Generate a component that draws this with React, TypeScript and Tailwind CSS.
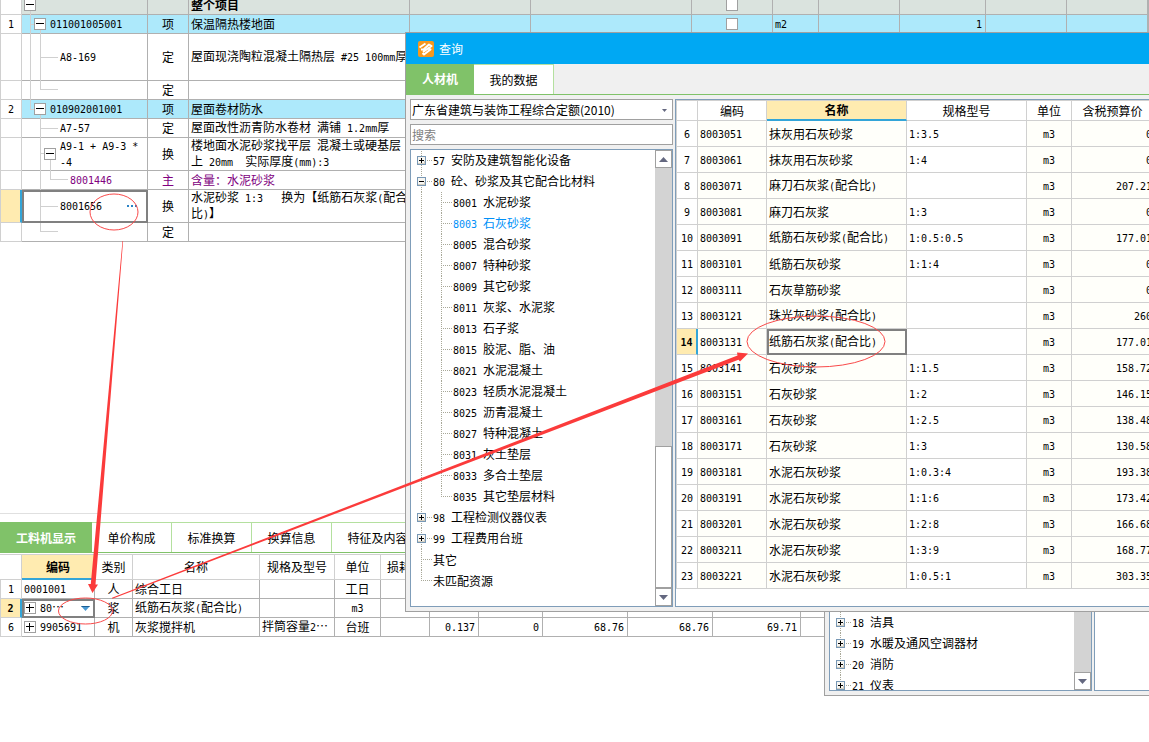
import { useState, type ReactNode } from 'react';
import clsx from 'clsx';

// Latin runs are set in a narrow mono face so that two of them fill one CJK square
function T({ children }: { children: string }) {
  return (
    <>
      {children.split(/([ -~]+)/).map((part, i) =>
        i % 2 ? (
          <span key={i} className="whitespace-pre font-['DejaVu_Sans_Mono',monospace] text-[10px]">
            {part}
          </span>
        ) : (
          part
        )
      )}
    </>
  );
}

const budgetCols = [
  'w-[21px]', 'w-[126px]', 'w-[41px]', 'w-[221px]', 'w-[121px]', 'w-[161px]', 'w-[81px]',
  'w-[46px]', 'w-[81px]', 'w-[86px]', 'w-[81px]', 'w-[81px]', '',
];

type BudgetRow = {
  no?: string;
  code?: string;
  kind?: string;
  name?: string;
  unit?: string;
  qty?: string;
  height: string;
  indent?: string;
  toggle?: boolean;
  style?: 'root' | 'item' | 'main';
  selected?: boolean;
};

const budgetRows: BudgetRow[] = [
  { name: '整个项目', height: 'h-[19px]', indent: 'pl-[2px]', toggle: true, style: 'root' },
  { no: '1', code: '011001005001', kind: '项', name: '保温隔热楼地面', unit: 'm2', qty: '1', height: 'h-[19px]', indent: 'pl-3', toggle: true, style: 'item' },
  { code: 'A8-169', kind: '定', name: '屋面现浇陶粒混凝土隔热层 #25 100mm厚', height: 'h-[47px]', indent: 'pl-[38px]' },
  { kind: '定', height: 'h-[19px]' },
  { no: '2', code: '010902001001', kind: '项', name: '屋面卷材防水', height: 'h-[19px]', indent: 'pl-3', toggle: true, style: 'item' },
  { code: 'A7-57', kind: '定', name: '屋面改性沥青防水卷材 满铺 1.2mm厚', height: 'h-[19px]', indent: 'pl-[38px]' },
  { code: 'A9-1 + A9-3 *\n-4', kind: '换', name: '楼地面水泥砂浆找平层 混凝土或硬基层\n上 20mm  实际厚度(mm):3', height: 'h-[33px]', indent: 'pl-[22px]', toggle: true },
  { code: '8001446', kind: '主', name: '含量：水泥砂浆', height: 'h-[19px]', indent: 'pl-12', style: 'main' },
  { code: '8001656', kind: '换', name: '水泥砂浆 1:3   换为【纸筋石灰浆(配合\n比)】', height: 'h-[33px]', indent: 'pl-[38px]', selected: true },
  { kind: '定', height: 'h-[19px]' },
];

const resourceCols = [
  'w-[22px]', 'w-[73px]', 'w-[38px]', 'w-[127px]', 'w-[75px]', 'w-[46px]', 'w-[49px]',
  'w-[49px]', 'w-[64px]', 'w-[85px]', 'w-[85px]', 'w-[88px]', '',
];
const resourceHeads = ['', '编码', '类别', '名称', '规格及型号', '单位', '损耗率', '含量', '数量', '', '', '', ''];
const resourceRows = [
  ['1', '0001001', '人', '综合工日', '', '工日', '', '', '', '', '', '', ''],
  ['2', '80…', '浆', '纸筋石灰浆(配合比)', '', 'm3', '', '0', '0.0002', '177.01', '177.01', '177.01', ''],
  ['6', '9905691', '机', '灰浆搅拌机', '拌筒容量2…', '台班', '', '0.137', '0', '68.76', '68.76', '69.71', ''],
];
const resourceTabs = [
  { label: '工料机显示', width: 'w-[92px]' },
  { label: '单价构成', width: 'w-20 border-r' },
  { label: '标准换算', width: 'w-20 border-r' },
  { label: '换算信息', width: 'w-20 border-r' },
  { label: '特征及内容', width: 'w-[92px] border-r' },
];

type TreeNode = { text: string; level?: 1; open?: boolean; toggle?: boolean; last?: boolean };

const categories: TreeNode[] = [
  { text: '57 安防及建筑智能化设备', toggle: true },
  { text: '80 砼、砂浆及其它配合比材料', toggle: true, open: true },
  { text: '8001 水泥砂浆', level: 1 },
  { text: '8003 石灰砂浆', level: 1 },
  { text: '8005 混合砂浆', level: 1 },
  { text: '8007 特种砂浆', level: 1 },
  { text: '8009 其它砂浆', level: 1 },
  { text: '8011 灰浆、水泥浆', level: 1 },
  { text: '8013 石子浆', level: 1 },
  { text: '8015 胶泥、脂、油', level: 1 },
  { text: '8021 水泥混凝土', level: 1 },
  { text: '8023 轻质水泥混凝土', level: 1 },
  { text: '8025 沥青混凝土', level: 1 },
  { text: '8027 特种混凝土', level: 1 },
  { text: '8031 灰土垫层', level: 1 },
  { text: '8033 多合土垫层', level: 1 },
  { text: '8035 其它垫层材料', level: 1, last: true },
  { text: '98 工程检测仪器仪表', toggle: true },
  { text: '99 工程费用台班', toggle: true },
  { text: '其它' },
  { text: '未匹配资源', last: true },
];

const moreCategories: TreeNode[] = [
  { text: '18 洁具', toggle: true },
  { text: '19 水暖及通风空调器材', toggle: true },
  { text: '20 消防', toggle: true },
  { text: '21 仪表', toggle: true },
];

const materialHeads = ['', '编码', '名称', '规格型号', '单位', '含税预算价'];
const materialCols = ['w-[21px]', 'w-[69px]', 'w-[140px]', 'w-[120px]', 'w-[45px]', 'w-[82px]'];
const materials = [
  ['6', '8003051', '抹灰用石灰砂浆', '1:3.5', 'm3', '0'],
  ['7', '8003061', '抹灰用石灰砂浆', '1:4', 'm3', '0'],
  ['8', '8003071', '麻刀石灰浆(配合比)', '', 'm3', '207.21'],
  ['9', '8003081', '麻刀石灰浆', '1:3', 'm3', '0'],
  ['10', '8003091', '纸筋石灰砂浆(配合比)', '1:0.5:0.5', 'm3', '177.01'],
  ['11', '8003101', '纸筋石灰砂浆', '1:1:4', 'm3', '0'],
  ['12', '8003111', '石灰草筋砂浆', '', 'm3', '0'],
  ['13', '8003121', '珠光灰砂浆(配合比)', '', 'm3', '260'],
  ['14', '8003131', '纸筋石灰浆(配合比)', '', 'm3', '177.01'],
  ['15', '8003141', '石灰砂浆', '1:1.5', 'm3', '158.72'],
  ['16', '8003151', '石灰砂浆', '1:2', 'm3', '146.15'],
  ['17', '8003161', '石灰砂浆', '1:2.5', 'm3', '138.48'],
  ['18', '8003171', '石灰砂浆', '1:3', 'm3', '130.58'],
  ['19', '8003181', '水泥石灰砂浆', '1:0.3:4', 'm3', '193.38'],
  ['20', '8003191', '水泥石灰砂浆', '1:1:6', 'm3', '173.42'],
  ['21', '8003201', '水泥石灰砂浆', '1:2:8', 'm3', '166.68'],
  ['22', '8003211', '水泥石灰砂浆', '1:3:9', 'm3', '168.77'],
  ['23', '8003221', '水泥石灰砂浆', '1:0.5:1', 'm3', '303.35'],
];

function Cols({ widths }: { widths: string[] }) {
  return (
    <colgroup>
      {widths.map((w, i) => (
        <col key={i} className={w} />
      ))}
    </colgroup>
  );
}

function ToggleBox({ open }: { open?: boolean }) {
  return (
    <button
      aria-label={open ? '折叠' : '展开'}
      className="relative z-10 h-3 w-3 shrink-0 border border-[#a0a0a0] bg-white"
    >
      <svg viewBox="0 0 10 10" className="block h-[10px] w-[10px]" shapeRendering="crispEdges">
        <path d={open ? 'M1 4h8v1H1z' : 'M1 4h8v1H1zM4 1h1v8H4z'} />
      </svg>
    </button>
  );
}

// Grey frame over the active cell
function CellFrame() {
  return <span className="pointer-events-none absolute -right-px -bottom-px left-0 top-0 z-10 border-2 border-[#808080]" />;
}

function BudgetTable() {
  return (
    <div className="relative overflow-hidden">
      <table className="-mt-1 w-full table-fixed border-separate border-spacing-0 border-l border-[#d0d0d0]">
        <Cols widths={budgetCols} />
        <tbody>
          {budgetRows.map((row, i) => {
            const cell = clsx(
              'border-b border-r border-[#b0b0b0] p-0',
              row.height,
              row.style === 'root' && 'bg-[#dae3de]',
              row.style === 'item' && 'bg-[#ade9fb]',
              row.style === 'main' && 'text-[#800080]'
            );
            return (
              <tr key={i}>
                <td
                  className={clsx(
                    'border-b border-r border-[#d0d0d0] p-0 text-center',
                    row.selected && 'border-r-2 border-r-[#33a5d8] bg-[#ffebb0]'
                  )}
                >
                  <T>{row.no ?? ''}</T>
                </td>
                <td className={clsx(cell, 'relative')}>
                  <div className={clsx('flex items-center gap-1', row.indent)}>
                    {row.toggle && <ToggleBox open />}
                    <span className="whitespace-pre">
                      <T>{row.code ?? ''}</T>
                    </span>
                    {row.selected && (
                      <button aria-label="选择" className="ml-auto mr-2.5 flex gap-[2px]">
                        <span className="h-[2px] w-[2px] bg-[#2b83c6]" />
                        <span className="h-[2px] w-[2px] bg-[#2b83c6]" />
                        <span className="h-[2px] w-[2px] bg-[#2b83c6]" />
                      </button>
                    )}
                  </div>
                  {row.selected && <CellFrame />}
                </td>
                <td className={clsx(cell, 'text-center')}>{row.kind}</td>
                <td className={clsx(cell, 'relative whitespace-pre pl-[2px]', row.style === 'root' && 'font-bold')}>
                  <T>{row.name ?? ''}</T>
                  {row.style === 'main' && (
                    <svg width="4" height="4" className="absolute right-0 top-0">
                      <path d="M0 0h4v4z" fill="#f00" />
                    </svg>
                  )}
                </td>
                <td className={cell} />
                <td className={cell} />
                <td className={clsx(cell, 'text-center')}>
                  {(row.style === 'root' || row.style === 'item') && (
                    <input
                      type="checkbox"
                      aria-label={row.name}
                      className="mx-auto block h-3 w-3 appearance-none border border-[#a0a0a0] bg-white"
                    />
                  )}
                </td>
                <td className={clsx(cell, 'pl-[2px]')}>
                  <T>{row.unit ?? ''}</T>
                </td>
                <td className={cell} />
                <td className={clsx(cell, 'pr-[3px] text-right')}>
                  <T>{row.qty ?? ''}</T>
                </td>
                <td className={cell} />
                <td className={cell} />
                <td className={cell} />
              </tr>
            );
          })}
        </tbody>
      </table>
      {/* Tree connectors */}
      <svg className="pointer-events-none absolute left-0 top-0 h-[242px] w-[148px]" shapeRendering="crispEdges">
        <path
          d="M30.5 10V109M30 24.5H34M30 109.5H34M40.5 30V90M40 57.5H58M40 89.5H58M40.5 115V232M40 128.5H58M40 153.5H44M40 206.5H58M40 231.5H58M50.5 160V180M50 179.5H68"
          fill="none"
          stroke="#d0d0d0"
        />
      </svg>
    </div>
  );
}

function ResourcePanel() {
  const [active, setActive] = useState('工料机显示');
  return (
    <section className="mt-[271px] border-t border-[#e0e0e0] pt-2">
      <div role="tablist" className="flex border-b border-[#80c269]">
        {resourceTabs.map(({ label, width }) => (
          <button
            key={label}
            role="tab"
            aria-selected={label === active}
            onClick={() => setActive(label)}
            className={clsx(
              'h-[30px] shrink-0 border-t pt-px',
              width,
              label === active
                ? 'border-[#80c269] bg-[#80c269] font-bold text-white'
                : 'border-[#b4e09f]'
            )}
          >
            {label}
          </button>
        ))}
        <span className="flex-1 border-t border-[#b4e09f]" />
      </div>
      <table className="mt-px w-full table-fixed border-separate border-spacing-0 border-t border-[#d0d0d0]">
        <Cols widths={resourceCols} />
        <thead>
          <tr>
            {resourceHeads.map((head, i) => (
              <th
                key={i}
                className={clsx(
                  'h-[25px] overflow-hidden whitespace-nowrap border-r border-[#d0d0d0] p-0',
                  i === 1 ? 'border-b-2 border-b-[#33a5d8] bg-[#ffebb0]' : 'border-b font-normal',
                  i === 6 && 'pl-[6px] text-left'
                )}
              >
                {head}
              </th>
            ))}
          </tr>
        </thead>
        <tbody>
          {resourceRows.map((row, r) => (
            <tr key={r}>
              {row.map((value, i) => (
                <td
                  key={i}
                  className={clsx(
                    'relative h-[19px] whitespace-nowrap border-b border-r p-0',
                    i === 0 ? 'border-[#d0d0d0]' : 'border-[#b0b0b0]',
                    i === 0 && 'border-l text-center',
                    i === 0 && r === 1 && 'border-r-2 border-r-[#33a5d8] bg-[#ffebb0] font-bold',
                    (i === 2 || i === 5) && 'text-center',
                    (i === 1 || i === 3 || i === 4) && 'pl-[2px]',
                    i > 6 && 'pr-[3px] text-right'
                  )}
                >
                  {i === 1 && r > 0 ? (
                    <div className="flex items-center gap-1">
                      <ToggleBox />
                      <span>
                        <T>{value}</T>
                      </span>
                      {r === 1 && (
                        <button aria-label="下拉" className="ml-auto mr-1">
                          <svg width="9" height="5">
                            <path d="M0 0h9L4.500 5z" fill="#4a9ad4" />
                            <path d="M0 0h9L8 1H1z" fill="#1c5f94" />
                          </svg>
                        </button>
                      )}
                    </div>
                  ) : (
                    <T>{value}</T>
                  )}
                  {i === 1 && r === 1 && <CellFrame />}
                </td>
              ))}
            </tr>
          ))}
        </tbody>
      </table>
    </section>
  );
}

function NodeBox({ open }: { open?: boolean }) {
  return (
    <svg width="9" height="9" shapeRendering="crispEdges">
      <rect width="9" height="9" fill="#7898b5" />
      <rect x="1" y="1" width="7" height="7" fill="#f7f6f2" />
      <path d="M1 7h7v1H1zM7 5h1v3H7z" fill="#d3cdbf" />
      <path d={open ? 'M2 4h5v1H2z' : 'M2 4h5v1H2zM4 2h1v5H4z'} />
    </svg>
  );
}

function Tree({ nodes, continued }: { nodes: TreeNode[]; continued?: boolean }) {
  const [current, setCurrent] = useState('8003 石灰砂浆');
  return (
    <ul className="min-w-0 flex-1">
      {nodes.map((node, i) => {
        const rootEnd = node.last && !node.level;
        return (
          <li key={node.text} className="flex h-[21px] items-center pl-[6px]">
            <svg
              className={clsx('h-[21px] shrink-0', node.level ? 'w-9' : 'w-4')}
              shapeRendering="crispEdges"
              stroke="#a8a898"
              strokeDasharray="1 1"
            >
              <path d={clsx(i === 0 && !continued ? 'M4.500 1' : 'M4.500 0', rootEnd ? 'V10' : 'V21')} />
              {!node.level && <path d="M4 10.500H15" />}
              {node.level && <path d={node.last ? 'M24.500 0V10' : 'M24.500 0V21'} />}
              {node.level && <path d="M24 10.500H35" />}
              {node.toggle && (
                <g strokeDasharray="none" stroke="none" transform="translate(0 6)">
                  <NodeBox open={node.open} />
                </g>
              )}
            </svg>
            <button
              onClick={() => setCurrent(node.text)}
              className={clsx('whitespace-nowrap', node.text === current && 'text-[#0090f8]')}
            >
              <T>{node.text}</T>
            </button>
          </li>
        );
      })}
    </ul>
  );
}

function ScrollButton({ up }: { up?: boolean }) {
  return (
    <button
      aria-label={up ? '向上滚动' : '向下滚动'}
      className="flex h-[18px] shrink-0 items-center justify-center border border-[#a0a0a0] bg-white"
    >
      <svg width="9" height="5">
        <path d={up ? 'M0 5h9L4.500 0z' : 'M0 0h9L4.500 5z'} fill="#646880" />
      </svg>
    </button>
  );
}

function Panel({ children, className }: { children?: ReactNode; className?: string }) {
  return <div className={clsx('flex overflow-hidden border border-[#7f9db9] bg-white', className)}>{children}</div>;
}

function MaterialTable() {
  const [selected, setSelected] = useState('14');
  return (
    <table className="w-[478px] shrink-0 table-fixed self-start border-separate border-spacing-0 border-l border-t border-[#d0d0d0]">
      <Cols widths={materialCols} />
      <thead>
        <tr>
          {materialHeads.map((head, i) => (
            <th
              key={i}
              className={clsx(
                'h-5 border-r border-[#d0d0d0] p-0',
                i === 2 ? 'border-b-2 border-b-[#33a5d8] bg-[#ffebb0]' : 'border-b font-normal'
              )}
            >
              {head}
            </th>
          ))}
        </tr>
      </thead>
      <tbody>
        {materials.map((row) => (
          <tr key={row[0]} onClick={() => setSelected(row[0])}>
            {row.map((value, i) => (
              <td
                key={i}
                className={clsx(
                  'relative h-[26px] whitespace-nowrap border-b border-r border-[#d0d0d0] p-0',
                  (i === 0 || i === 4) && 'text-center',
                  (i === 1 || i === 2 || i === 3) && 'pl-[2px]',
                  i === 5 && 'pr-px text-right',
                  i !== 0 && i !== 3 && 'bg-[#fffffa]',
                  i === 0 && row[0] === selected && 'border-r-2 border-r-[#33a5d8] bg-[#ffebb0] font-bold'
                )}
              >
                <T>{value}</T>
                {i === 2 && row[0] === selected && <CellFrame />}
              </td>
            ))}
          </tr>
        ))}
      </tbody>
    </table>
  );
}

function QueryDialog() {
  return (
    <div
      role="dialog"
      aria-label="查询"
      className="absolute left-[405px] right-0 top-8 overflow-hidden border-b border-l border-t border-[#a0a0a0] bg-[#f0f0f0]"
    >
      <header className="flex h-[31px] items-center gap-[5px] bg-[#00a8f3] pl-3 text-white">
        <svg width="16" height="16" viewBox="0 0 16 16">
          <rect width="16" height="16" rx="2" fill="#f7981d" />
          <g fill="none" stroke="#fff" strokeWidth="2" strokeLinejoin="round">
            <path d="M1.500 6.500L7.500 2.500M3 8.500h2.500L11 3.500l2.500 1.500L5 11" />
            <path d="M10 7.500l2.500 1L6 13.500 4.500 12" />
          </g>
        </svg>
        <h2>查询</h2>
      </header>
      <div role="tablist" className="flex border-b border-[#80c269]">
        <button role="tab" aria-selected className="h-[30px] w-[68px] bg-[#80c269] font-bold text-white">
          人材机
        </button>
        <button role="tab" aria-selected={false} className="h-[30px] w-20 border-r border-t border-[#b4e09f] bg-white pt-px">
          我的数据
        </button>
      </div>
      <div className="flex h-[516px] gap-[2px] pb-1 pl-1 pt-1">
        <div className="flex w-[263px] shrink-0 flex-col gap-1">
          <div className="relative">
            <select
              aria-label="定额库"
              className="block h-[21px] w-full appearance-none border border-[#a0a0a0] bg-white pl-px text-[12px]"
            >
              <option>广东省建筑与装饰工程综合定额(2010)</option>
            </select>
            <svg width="5" height="3" className="pointer-events-none absolute right-[6px] top-[10px]">
              <path d="M0 0h5L2.500 3z" fill="#646880" />
            </svg>
          </div>
          <input
            aria-label="搜索"
            placeholder="搜索"
            className="h-[21px] border border-[#a0a0a0] bg-white px-px placeholder:text-[#808080]"
          />
          <Panel className="min-h-0 flex-1">
            <Tree nodes={categories} />
            <div className="flex w-[17px] shrink-0 flex-col bg-[#d3d3d3]">
              <ScrollButton up />
              <div className="mt-auto h-[142px] border border-[#a0a0a0] bg-white" />
              <ScrollButton />
            </div>
          </Panel>
        </div>
        <Panel className="min-w-0 flex-1 border-r-0">
          <MaterialTable />
        </Panel>
      </div>
    </div>
  );
}

function BackDialog() {
  return (
    <div className="absolute left-[824px] right-0 top-[611px] overflow-hidden border-b border-l border-[#a0a0a0] bg-[#f0f0f0]">
      <div className="flex h-[84px] gap-[2px] pb-1 pl-1">
        <Panel className="w-[263px] shrink-0">
          <Tree nodes={moreCategories} continued />
          <div className="flex w-[17px] shrink-0 flex-col justify-end bg-[#d3d3d3]">
            <ScrollButton />
          </div>
        </Panel>
        <Panel className="min-w-0 flex-1 border-r-0" />
      </div>
    </div>
  );
}

// Red marks: code cell -> resource row -> material row
function Annotations() {
  return (
    <svg className="pointer-events-none absolute left-0 top-0 z-20 h-[742px] w-[1149px]">
      <g fill="none" stroke="#f94a4a" strokeWidth="1">
        <ellipse cx="114" cy="212" rx="24" ry="18" />
        <ellipse cx="85.500" cy="611" rx="27" ry="13" />
        <ellipse cx="816" cy="341.500" rx="69" ry="25.500" />
      </g>
      <g fill="#fb3b3b">
        <path d="M122.500 241h.6L95.500 584.500H98L92.500 593 88 584h2.800z" />
        <path d="M112 597.800L112.400 598.800 738.500 359.800 740 361.500 748 353.500 737 352.500 737.500 355.500z" />
      </g>
    </svg>
  );
}

export default function App() {
  return (
    <main
      lang="zh-CN"
      className="relative min-h-screen overflow-hidden bg-white font-['Noto_Sans_CJK_SC',sans-serif] text-[12px] leading-[14px] text-black"
    >
      <BudgetTable />
      <ResourcePanel />
      <BackDialog />
      <QueryDialog />
      <Annotations />
    </main>
  );
}
